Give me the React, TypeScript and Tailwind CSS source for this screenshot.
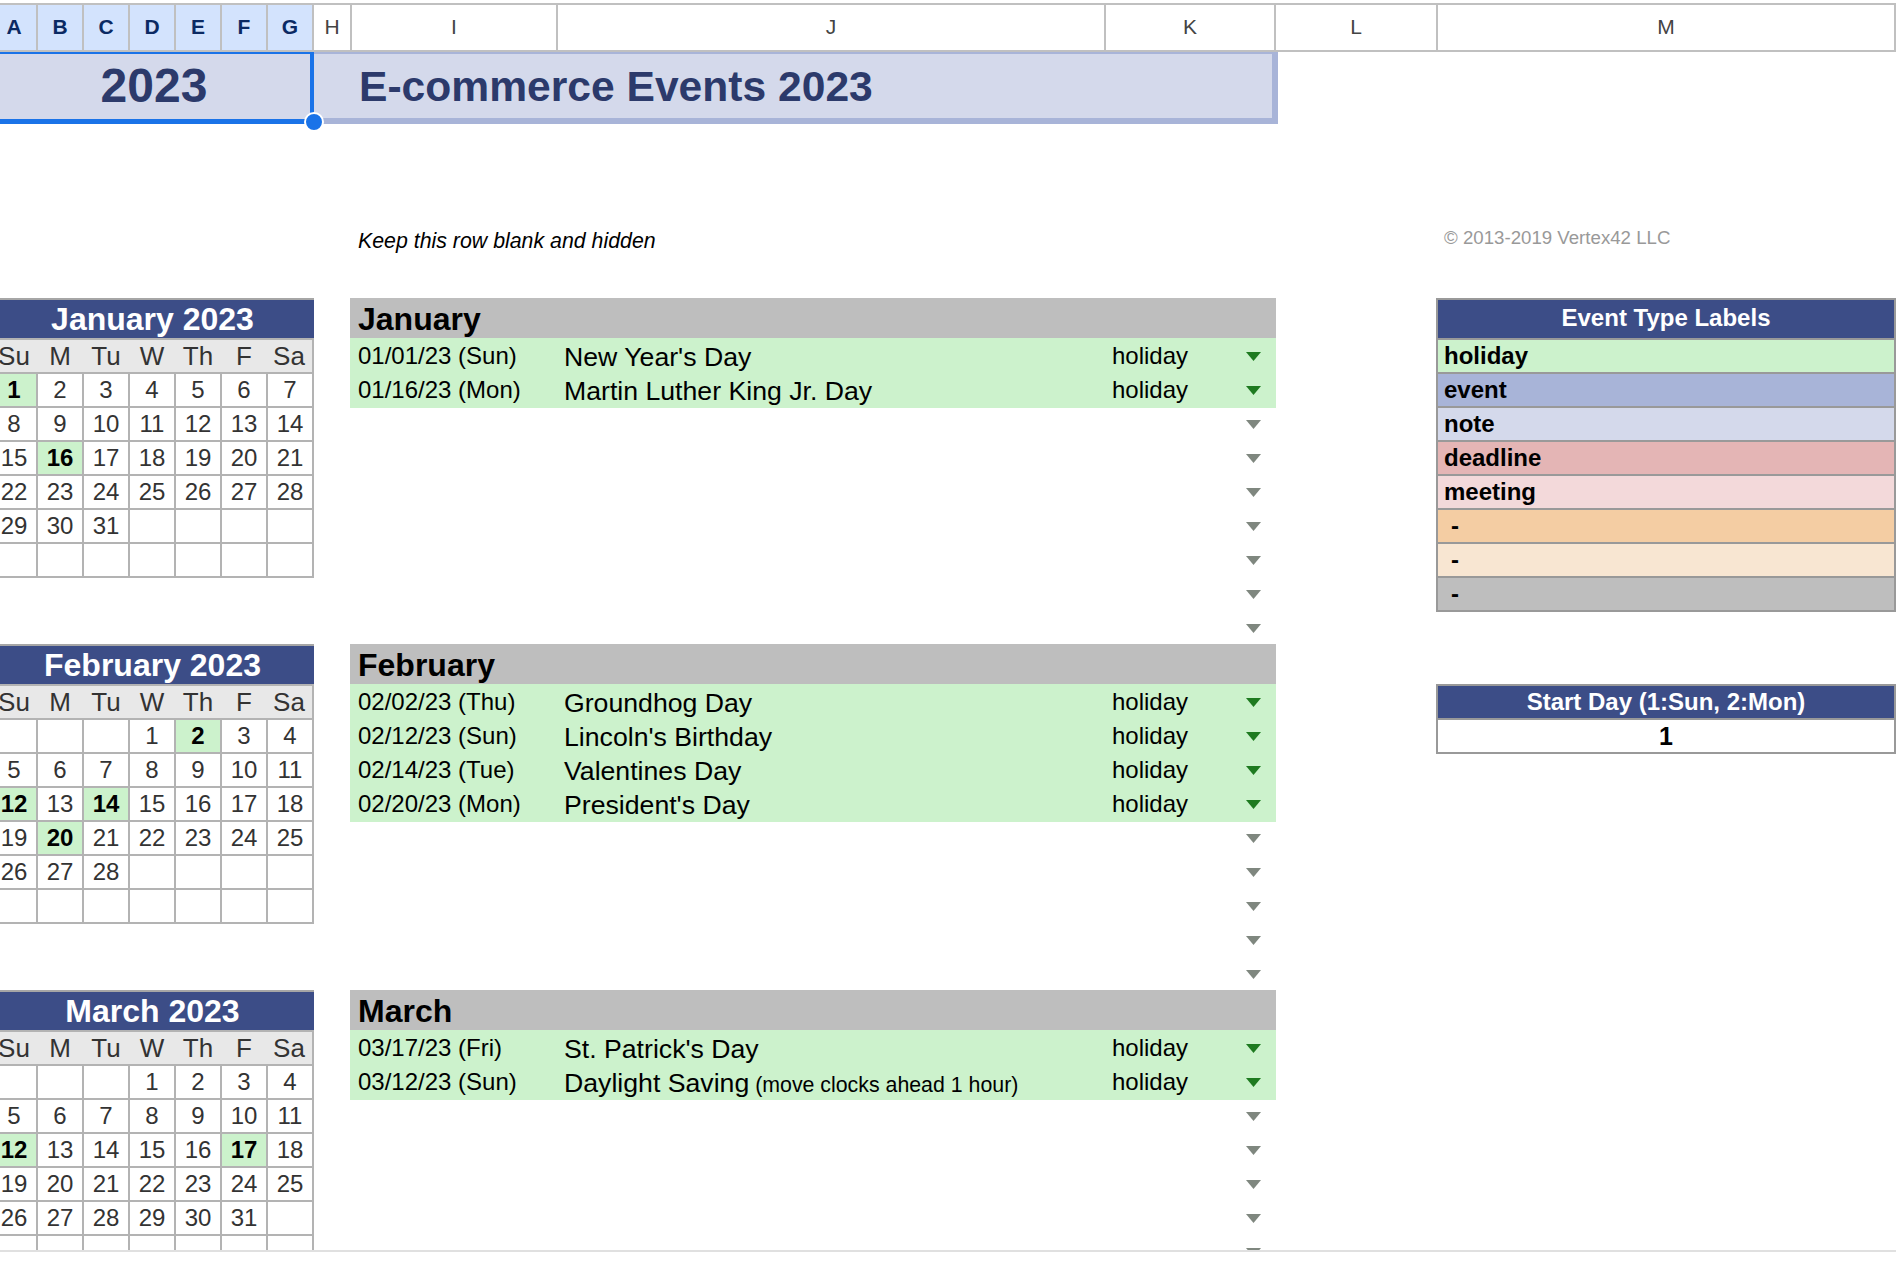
import React from "react";

const FONT = "font-['Liberation_Sans',Arial,sans-serif]";

function Arrow({ active }: { active: boolean }) {
  return (
    <svg width="15" height="9" viewBox="0 0 15 9" className="shrink-0">
      <polygon points="0,0 15,0 7.5,9" fill={active ? "#1e7a20" : "#7f877f"} />
    </svg>
  );
}

const headerLeft = ["A", "B", "C", "D", "E", "F", "G"];
const headerRight: [string, string][] = [
  ["H", "w-[38px]"],
  ["I", "w-[206px]"],
  ["J", "w-[548px]"],
  ["K", "w-[170px]"],
  ["L", "w-[162px]"],
  ["M", "flex-1"],
];

function SheetHeader() {
  return (
    <div className="mt-[3px] flex h-[49px] border-y-2 border-[#c0c0c0]">
      {headerLeft.map((c, i) => (
        <div
          key={c}
          className={`flex items-center justify-center border-r-2 border-[#c0c0c0] bg-[#d3e3fd] pb-[2px] text-[21px] font-bold text-[#0b2a63] ${
            i === 0 ? "w-[38px] pr-2" : "w-[46px]"
          }`}
        >
          {c}
        </div>
      ))}
      {headerRight.map(([c, w]) => (
        <div
          key={c}
          className={`flex items-center justify-center border-r-2 border-[#c0c0c0] pb-[2px] text-[21px] text-[#444444] ${w}`}
        >
          {c}
        </div>
      ))}
    </div>
  );
}

function TitleRow() {
  return (
    <div className="relative flex h-[72px]">
      <div className="flex w-[314px] items-center justify-center border-t-2 border-b-[5px] border-r-4 border-[#1a73e8] bg-[#d4d9eb] pb-[2px] pr-[2px] text-[48px] font-bold text-[#2c3a6b]">
        2023
      </div>
      <div className="flex w-[964px] items-center border-t-2 border-b-[6px] border-r-[6px] border-[#a8b4d8] bg-[#d4d9eb] pl-[45px] pt-[2px] text-[42.6px] font-bold text-[#2c3a6b]">
        E-commerce Events 2023
      </div>
      <div className="absolute left-[304px] top-[60px] h-[20px] w-[20px] rounded-full border-2 border-white bg-[#1a73e8]" />
    </div>
  );
}

function NotesRow() {
  return (
    <div className="flex h-[174px]">
      <div className="w-[358px]" />
      <div className="w-[1086px] pt-[104px] text-[21.33px] italic leading-[26px] text-black">
        Keep this row blank and hidden
      </div>
      <div className="pt-[101px] text-[18.67px] leading-[26px] text-[#999999]">
        © 2013-2019 Vertex42 LLC
      </div>
    </div>
  );
}

const DOW = ["Su", "M", "Tu", "W", "Th", "F", "Sa"];

function Calendar({
  title,
  startOffset,
  days,
  marked,
}: {
  title: string;
  startOffset: number;
  days: number;
  marked: number[];
}) {
  const cells: (number | null)[] = [];
  for (let i = 0; i < 42; i++) {
    const d = i - startOffset + 1;
    cells.push(d >= 1 && d <= days ? d : null);
  }
  return (
    <div className="mb-[66px] w-[314px]">
      <div className="flex h-[40px] items-center justify-center border-t-2 border-[#a6a6a6] bg-[#3c4d87] pr-[9px] text-[32px] font-bold text-white">
        {title}
      </div>
      <div className="grid grid-cols-[38px_repeat(6,46px)] border-t-2 border-[#b3b3b3] text-[24px] text-[#333333]">
        {DOW.map((d, i) => (
          <div
            key={d}
            className={`flex h-[34px] items-center justify-center whitespace-nowrap border-b-2 border-[#b3b3b3] bg-[#e8e8e8] pt-[1px] text-[26px] ${
              i === 0 ? "pr-[10px]" : "pr-[2px]"
            } ${i === 6 ? "border-r-2" : ""}`}
          >
            {d}
          </div>
        ))}
        {cells.map((d, i) => {
          const on = d !== null && marked.includes(d);
          return (
            <div
              key={i}
              className={`flex h-[34px] items-center justify-center border-b-2 border-r-2 border-[#b3b3b3] ${
                i % 7 === 0 ? "pr-2" : ""
              } ${on ? "bg-[#ccf2cc] font-bold text-black" : ""}`}
            >
              {d}
            </div>
          );
        })}
      </div>
    </div>
  );
}

type Ev = { date: string; name: string; note?: string };

function EventRow({ ev }: { ev?: Ev }) {
  return (
    <div className="flex h-[34px] items-center pt-[2px] text-black">
      <div className="w-[206px] pl-[8px] text-[24px]">{ev?.date}</div>
      <div className="w-[548px] whitespace-nowrap pl-[8px] pt-[1px] text-[26.67px]">
        {ev?.name}
        {ev?.note && <span className="text-[21.33px]"> {ev.note}</span>}
      </div>
      <div className="flex w-[172px] items-center justify-between pl-[8px] pr-[15px] text-[24px]">
        <span>{ev ? "holiday" : ""}</span>
        <Arrow active={!!ev} />
      </div>
    </div>
  );
}

function EventBlock({ month, events }: { month: string; events: Ev[] }) {
  const blanks = 9 - events.length;
  return (
    <div className="h-[346px] w-[926px]">
      <div className="flex h-[40px] items-center bg-[#bebebe] pl-[8px] pt-[2px] text-[32px] font-bold text-black">
        {month}
      </div>
      <div className="bg-[#ccf2cc] pb-[2px]">
        {events.map((e) => (
          <EventRow key={e.date} ev={e} />
        ))}
      </div>
      <div className="-mt-[2px]">
        {Array.from({ length: blanks }).map((_, i) => (
          <EventRow key={i} />
        ))}
      </div>
    </div>
  );
}

const labels: [string, string, string, string][] = [
  ["holiday", "bg-[#ccf2cc]", "pl-[6px]", "h-[34px] border-b-2 border-[#999999]"],
  ["event", "bg-[#a8b4d8]", "pl-[6px]", "h-[34px] border-b-2 border-[#999999]"],
  ["note", "bg-[#d4d9eb]", "pl-[6px]", "h-[34px] border-b-2 border-[#999999]"],
  ["deadline", "bg-[#e4b5b5]", "pl-[6px]", "h-[34px] border-b-2 border-[#999999]"],
  ["meeting", "bg-[#f3d9da]", "pl-[6px]", "h-[34px] border-b-2 border-[#999999]"],
  ["-", "bg-[#f4cda3]", "pl-[13px]", "h-[34px] border-b-2 border-[#999999]"],
  ["-", "bg-[#f8e6d2]", "pl-[13px]", "h-[34px] border-b-2 border-[#999999]"],
  ["-", "bg-[#bebebe]", "pl-[13px]", "h-[32px]"],
];

function SidePanel() {
  return (
    <div className="ml-[160px] w-[460px] text-[24px] font-bold text-black">
      <div className="border-2 border-[#999999]">
        <div className="flex h-[40px] items-center justify-center border-b-2 border-[#999999] bg-[#3c4d87] pb-[2px] text-white">
          Event Type Labels
        </div>
        {labels.map(([t, bg, pad, h], i) => (
          <div key={i} className={`flex items-center ${bg} ${pad} ${h}`}>
            {t}
          </div>
        ))}
      </div>
      <div className="mt-[72px] border-2 border-[#999999]">
        <div className="flex h-[34px] items-center justify-center border-b-2 border-[#999999] bg-[#3c4d87] text-white">
          Start Day (1:Sun, 2:Mon)
        </div>
        <div className="flex h-[32px] items-center justify-center bg-white pt-[1px] text-[25px]">
          1
        </div>
      </div>
    </div>
  );
}

export default function App() {
  return (
    <div className={`${FONT} h-[1272px] w-[1896px] overflow-hidden bg-white`}>
      <SheetHeader />
      <TitleRow />
      <NotesRow />
      <div className="flex h-[954px] overflow-hidden border-b-2 border-[#e0e0e0]">
        <div className="w-[314px] shrink-0">
          <Calendar title="January 2023" startOffset={0} days={31} marked={[1, 16]} />
          <Calendar title="February 2023" startOffset={3} days={28} marked={[2, 12, 14, 20]} />
          <Calendar title="March 2023" startOffset={3} days={31} marked={[12, 17]} />
        </div>
        <div className="ml-[36px] w-[926px] shrink-0">
          <EventBlock
            month="January"
            events={[
              { date: "01/01/23 (Sun)", name: "New Year's Day" },
              { date: "01/16/23 (Mon)", name: "Martin Luther King Jr. Day" },
            ]}
          />
          <EventBlock
            month="February"
            events={[
              { date: "02/02/23 (Thu)", name: "Groundhog Day" },
              { date: "02/12/23 (Sun)", name: "Lincoln's Birthday" },
              { date: "02/14/23 (Tue)", name: "Valentines Day" },
              { date: "02/20/23 (Mon)", name: "President's Day" },
            ]}
          />
          <EventBlock
            month="March"
            events={[
              { date: "03/17/23 (Fri)", name: "St. Patrick's Day" },
              { date: "03/12/23 (Sun)", name: "Daylight Saving", note: "(move clocks ahead 1 hour)" },
            ]}
          />
        </div>
        <SidePanel />
      </div>
    </div>
  );
}
